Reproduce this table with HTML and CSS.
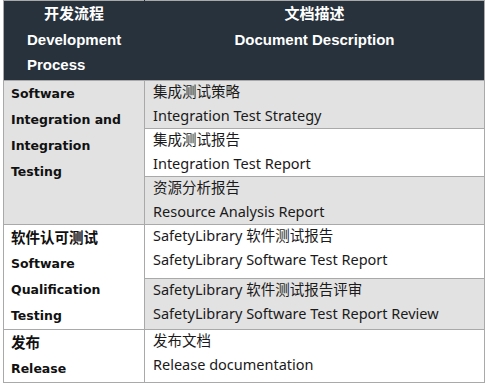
FILE: index.html
```html
<!DOCTYPE html>
<html lang="zh-CN">
<head>
<meta charset="utf-8">
<link rel="stylesheet" href="styles.css">
</head>
<body>
<table class="doc-table">
  <thead>
    <tr>
      <th class="col-process">
        <div class="zh-head">开发流程</div>
        <div class="en-head">Development<br>Process</div>
      </th>
      <th class="col-doc">
        <div>文档描述</div>
        <div>Document Description</div>
      </th>
    </tr>
  </thead>
  <tbody>
    <tr class="shade">
      <td class="stage" rowspan="3">Software<br>Integration and<br>Integration<br>Testing</td>
      <td class="doc"><div>集成测试策略</div><div>Integration Test Strategy</div></td>
    </tr>
    <tr>
      <td class="doc"><div>集成测试报告</div><div>Integration Test Report</div></td>
    </tr>
    <tr class="shade">
      <td class="doc"><div>资源分析报告</div><div>Resource Analysis Report</div></td>
    </tr>
    <tr>
      <td class="stage tall" rowspan="2"><span class="zh">软件认可测试</span><br>Software<br>Qualification<br>Testing</td>
      <td class="doc"><div>SafetyLibrary 软件测试报告</div><div>SafetyLibrary Software Test Report</div></td>
    </tr>
    <tr class="shade">
      <td class="doc"><div>SafetyLibrary 软件测试报告评审</div><div>SafetyLibrary Software Test Report Review</div></td>
    </tr>
    <tr>
      <td class="stage"><span class="zh">发布</span><br>Release</td>
      <td class="doc"><div>发布文档</div><div>Release documentation</div></td>
    </tr>
  </tbody>
</table>
</body>
</html>
```
FILE: styles.css
```css
html, body {
  margin: 0;
  padding: 0;
  background: #ffffff;
}
body {
  padding: 0 1px 0 3px;
}
.doc-table {
  border-collapse: collapse;
  width: 482px;
  table-layout: fixed;
}
.doc-table th,
.doc-table td {
  border: 1px solid #a9a9a9;
  vertical-align: top;
}
.doc-table thead th {
  background: #27323c;
  color: #ffffff;
  font-family: "Liberation Sans", Arial, "Noto Sans CJK SC", sans-serif;
  font-weight: bold;
  font-size: 15px;
  line-height: 25.5px;
  height: 80px;
  padding: 0;
  box-sizing: border-box;
}
.doc-table thead th.col-process {
  border-right-color: #27323c;
}
.doc-table thead th.col-doc {
  border-left-color: #27323c;
}
.col-process {
  width: 141px;
  text-align: center;
}
.col-process .en-head {
  text-align: left;
  padding-left: 23px;
}
.col-doc {
  text-align: center;
}
.stage {
  font-family: "DejaVu Sans", "Noto Sans CJK SC", sans-serif;
  font-weight: bold;
  font-size: 12.5px;
  line-height: 26px;
  color: #111111;
  padding: 0 0 0 7px;
  background: #ffffff;
}
.stage .zh {
  font-family: "Noto Sans CJK SC", sans-serif;
  font-size: 14.5px;
  line-height: 24px;
  vertical-align: top;
}
tr.shade .stage {
  background: #e2e2e2;
}
.doc {
  font-family: "Noto Sans", "Noto Sans CJK SC", sans-serif;
  font-size: 14.5px;
  line-height: 23.5px;
  color: #1a1a1a;
  padding: 0 0 0 8px;
  height: 47px;
  box-sizing: border-box;
}
.doc div {
  white-space: nowrap;
}
.doc div:first-child {
  margin-top: -1px;
}
.doc div:last-child {
  margin-bottom: 1px;
}
tr.shade .doc {
  background: #e2e2e2;
}
.stage.tall + .doc {
  height: 51px;
}
```
